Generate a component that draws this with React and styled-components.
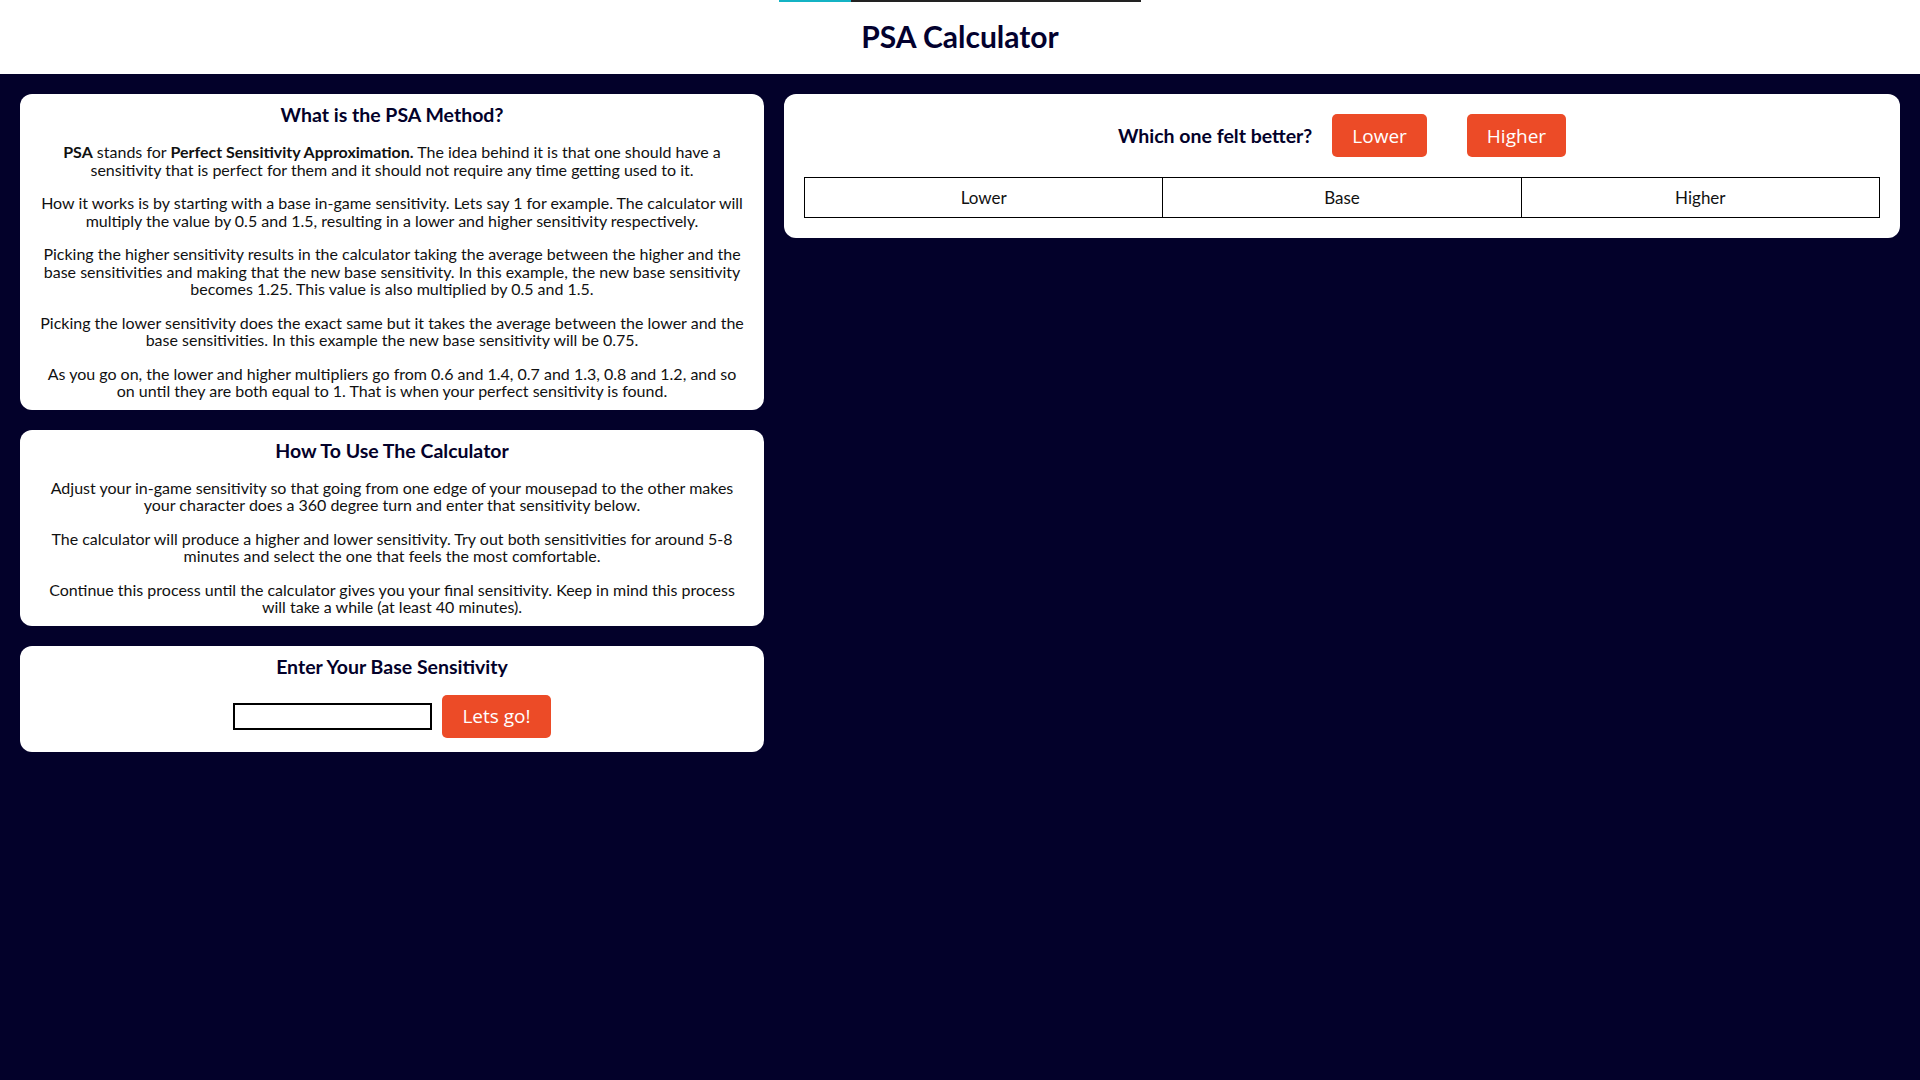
import React, { useState } from "react";
import styled, { createGlobalStyle } from "styled-components";

const GlobalStyle = createGlobalStyle`
  html, body { margin: 0; padding: 0; }
  body {
    background: #03012a;
    font-family: Lato, "Noto Sans", sans-serif;
    color: #111;
    min-height: 100vh;
  }
`;

const Header = styled.header`
  background: #fff;
  height: 74px;
  display: flex;
  flex-direction: column;
  align-items: center;
`;

const LoadBar = styled.div`
  width: 362px;
  height: 2px;
  background: #222;
  display: flex;
`;

const LoadFill = styled.div`
  width: 72px;
  height: 100%;
  background: #14b3c4;
`;

const Title = styled.h1`
  margin: 17px 0 0;
  font-size: 30px;
  line-height: 35px;
  font-weight: 700;
  color: #03012e;
`;

const Main = styled.main`
  display: grid;
  grid-template-columns: 2fr 3fr;
  gap: 20px;
  padding: 20px;
  align-items: start;
`;

const Column = styled.div`
  display: flex;
  flex-direction: column;
  gap: 20px;
`;

const Card = styled.section`
  background: #fff;
  border-radius: 12px;
  padding: ${(p) => (p.$roomy ? "20px" : "9px 20px 10px")};
  text-align: center;
`;

const CardTitle = styled.h2`
  margin: 0;
  font-size: 19.5px;
  line-height: 24px;
  font-weight: 700;
  color: #03012a;
`;

const Para = styled.p`
  margin: 16px 0 0;
  font-size: 16px;
  line-height: 17.5px;
  color: #111;
`;

const FormRow = styled.div`
  display: flex;
  justify-content: center;
  align-items: center;
  gap: 10px;
  margin: 16px 0 4px;
`;

const Input = styled.input`
  box-sizing: border-box;
  width: 199px;
  height: 27px;
  border: 2px solid #000;
  padding: 2px 4px;
  font-family: Lato, sans-serif;
  font-size: 15px;
  outline: none;
`;

const Button = styled.button`
  height: 43px;
  padding: 0 20px;
  border: none;
  border-radius: 5px;
  background: #ec4b27;
  color: #fff;
  font-family: "Open Sans", sans-serif;
  font-size: 19px;
  cursor: pointer;
  margin-left: ${(p) => (p.$spaced ? "20px" : "0")};
`;

const ChoiceRow = styled.div`
  display: flex;
  justify-content: center;
  align-items: center;
  gap: 20px;
`;

const Question = styled.h2`
  margin: 0;
  font-size: 19.5px;
  line-height: 24px;
  font-weight: 700;
  color: #03012a;
`;

const Table = styled.table`
  width: 100%;
  table-layout: fixed;
  border-collapse: collapse;
  margin-top: 20px;
`;

const Cell = styled.td`
  border: 1px solid #000;
  height: 39px;
  padding: 0;
  text-align: center;
  font-size: 17px;
  color: #111;
`;

export default function App() {
  const [value, setValue] = useState("");
  return (
    <>
      <GlobalStyle />
      <Header>
        <LoadBar>
          <LoadFill />
        </LoadBar>
        <Title>PSA Calculator</Title>
      </Header>
      <Main>
        <Column>
          <Card>
            <CardTitle>What is the PSA Method?</CardTitle>
            <Para>
              <b>PSA</b> stands for <b>Perfect Sensitivity Approximation.</b> The idea behind it is
              that one should have a sensitivity that is perfect for them and it should not require
              any time getting used to it.
            </Para>
            <Para>
              How it works is by starting with a base in-game sensitivity. Lets say 1 for example.
              The calculator will multiply the value by 0.5 and 1.5, resulting in a lower and higher
              sensitivity respectively.
            </Para>
            <Para>
              Picking the higher sensitivity results in the calculator taking the average between
              the higher and the base sensitivities and making that the new base sensitivity. In
              this example, the new base sensitivity becomes 1.25. This value is also multiplied by
              0.5 and 1.5.
            </Para>
            <Para>
              Picking the lower sensitivity does the exact same but it takes the average between the
              lower and the base sensitivities. In this example the new base sensitivity will be
              0.75.
            </Para>
            <Para>
              As you go on, the lower and higher multipliers go from 0.6 and 1.4, 0.7 and 1.3, 0.8
              and 1.2, and so on until they are both equal to 1. That is when your perfect
              sensitivity is found.
            </Para>
          </Card>
          <Card>
            <CardTitle>How To Use The Calculator</CardTitle>
            <Para>
              Adjust your in-game sensitivity so that going from one edge of your mousepad to the
              other makes your character does a 360 degree turn and enter that sensitivity below.
            </Para>
            <Para>
              The calculator will produce a higher and lower sensitivity. Try out both sensitivities
              for around 5-8 minutes and select the one that feels the most comfortable.
            </Para>
            <Para>
              Continue this process until the calculator gives you your final sensitivity. Keep in
              mind this process will take a while (at least 40 minutes).
            </Para>
          </Card>
          <Card>
            <CardTitle>Enter Your Base Sensitivity</CardTitle>
            <FormRow>
              <Input value={value} onChange={(e) => setValue(e.target.value)} />
              <Button>Lets go!</Button>
            </FormRow>
          </Card>
        </Column>
        <Card $roomy>
          <ChoiceRow>
            <Question>Which one felt better?</Question>
            <Button>Lower</Button>
            <Button $spaced>Higher</Button>
          </ChoiceRow>
          <Table>
            <tbody>
              <tr>
                <Cell>Lower</Cell>
                <Cell>Base</Cell>
                <Cell>Higher</Cell>
              </tr>
            </tbody>
          </Table>
        </Card>
      </Main>
    </>
  );
}
